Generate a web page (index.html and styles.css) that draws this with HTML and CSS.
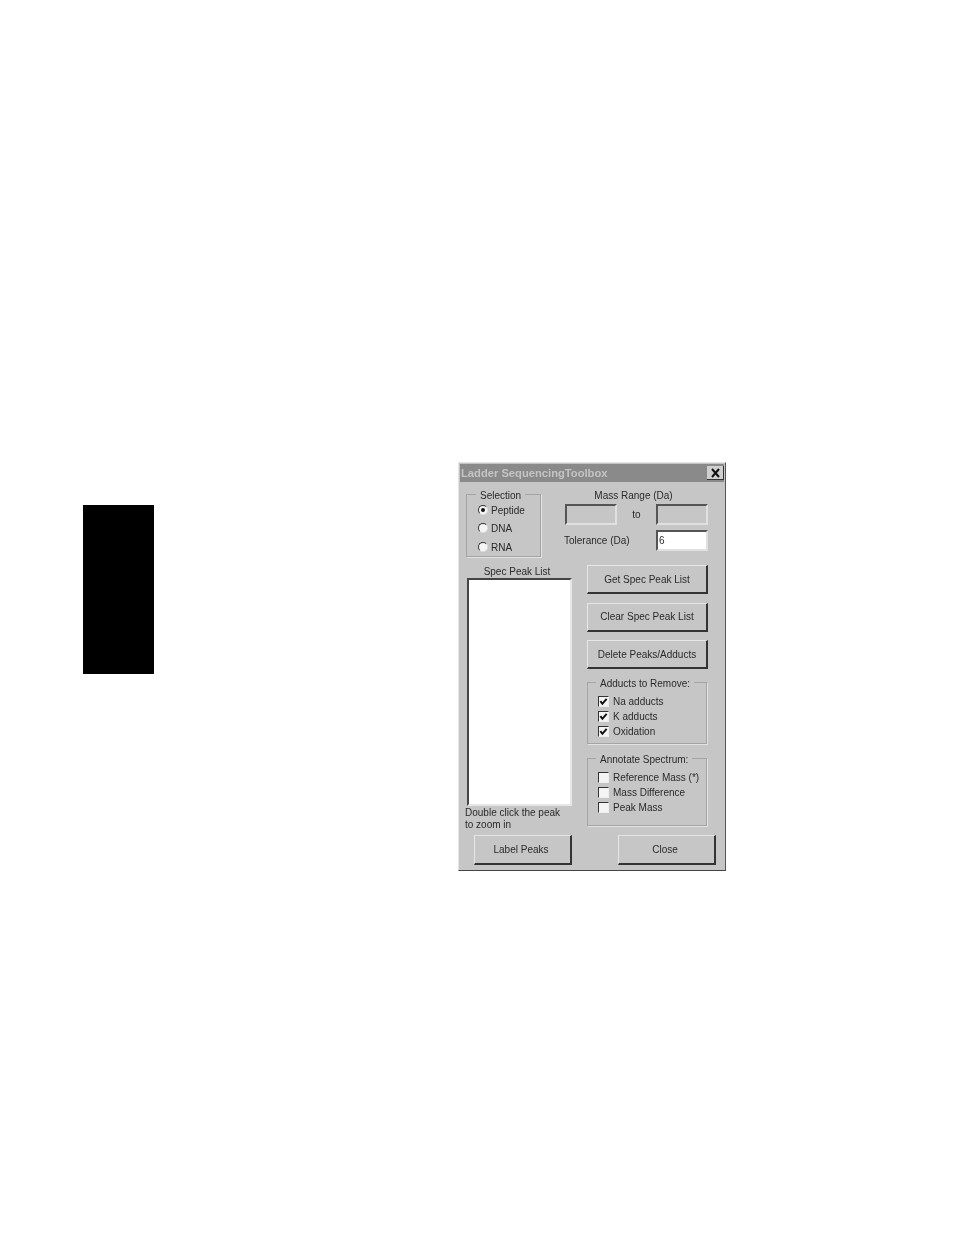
FILE: index.html
```html
<!DOCTYPE html>
<html lang="en">
<head>
  <meta charset="UTF-8">
  <title>Ladder Sequencing Toolbox</title>
  <link rel="stylesheet" href="styles.css">
</head>
<body>
  <div class="tab"></div>

  <div class="dialog">
    <div class="titlebar">
      <span>Ladder SequencingToolbox</span>
      <div class="close-x">
        <svg width="11" height="10" viewBox="0 0 11 10"><path d="M2 1 L9 9 M9 1 L2 9" stroke="#111" stroke-width="2" fill="none"/></svg>
      </div>
    </div>

    <div class="top-row">
      <div class="group selection">
        <div class="legend">Selection</div>
        <div class="radio-row r1"><span class="radio on"></span>Peptide</div>
        <div class="radio-row r2"><span class="radio"></span>DNA</div>
        <div class="radio-row r3"><span class="radio"></span>RNA</div>
      </div>
      <div class="mass">
        <div class="mass-title">Mass Range (Da)</div>
        <div class="mass-row">
          <div class="field"></div>
          <div class="to">to</div>
          <div class="field"></div>
        </div>
        <div class="tol-row">
          <div class="tol-label">Tolerance (Da)</div>
          <div class="field white">6</div>
        </div>
      </div>
    </div>

    <div class="mid-row">
      <div class="list-col">
        <div class="list-title">Spec Peak List</div>
        <div class="listbox"></div>
        <div class="hint">Double click the peak<br>to zoom in</div>
      </div>
      <div class="side-col">
        <div class="btn wide">Get Spec Peak List</div>
        <div class="btn wide">Clear Spec Peak List</div>
        <div class="btn wide">Delete Peaks/Adducts</div>

        <div class="group adducts">
          <div class="legend">Adducts to Remove:</div>
          <div class="check-row"><span class="check"><svg width="10" height="10" viewBox="0 0 10 10"><path d="M1.5 4 L3.8 7 L8.5 1.5" stroke="#111" stroke-width="2.2" fill="none"/></svg></span>Na adducts</div>
          <div class="check-row"><span class="check"><svg width="10" height="10" viewBox="0 0 10 10"><path d="M1.5 4 L3.8 7 L8.5 1.5" stroke="#111" stroke-width="2.2" fill="none"/></svg></span>K adducts</div>
          <div class="check-row"><span class="check"><svg width="10" height="10" viewBox="0 0 10 10"><path d="M1.5 4 L3.8 7 L8.5 1.5" stroke="#111" stroke-width="2.2" fill="none"/></svg></span>Oxidation</div>
        </div>

        <div class="group annotate">
          <div class="legend">Annotate Spectrum:</div>
          <div class="check-row"><span class="check"></span>Reference Mass (*)</div>
          <div class="check-row"><span class="check"></span>Mass Difference</div>
          <div class="check-row"><span class="check"></span>Peak Mass</div>
        </div>
      </div>
    </div>

    <div class="bottom-row">
      <div class="btn bottom">Label Peaks</div>
      <div class="btn bottom">Close</div>
    </div>
  </div>
</body>
</html>
```

FILE: styles.css
```css
html, body {
  margin: 0;
  background: #fff;
}

body {
  width: 954px;
  height: 1235px;
  box-sizing: border-box;
  padding: 462px 0 0 83px;
  display: flex;
  align-items: flex-start;
  font-family: "Liberation Sans", Arial, sans-serif;
  font-size: 10px;
  color: #2a2a2a;
  overflow: hidden;
}

.tab {
  width: 71px;
  height: 169px;
  margin-top: 43px;
  background: #000;
}

.dialog {
  width: 268px;
  height: 409px;
  box-sizing: border-box;
  margin-left: 304px;
  background: #c6c6c6;
  border-top: 1px solid #e4e4e4;
  border-left: 1px solid #e4e4e4;
  border-right: 1px solid #555;
  border-bottom: 1px solid #444;
  filter: blur(0.7px);
}

.titlebar {
  height: 18px;
  margin: 1px 1px 0;
  padding: 0 0 0 1px;
  box-sizing: border-box;
  background: #8a8a8a;
  color: #c4c4c4;
  font-size: 11.2px;
  font-weight: bold;
  display: flex;
  align-items: center;
  justify-content: space-between;
}

.close-x {
  width: 16px;
  height: 13px;
  background: #cfcfcf;
  border-right: 1px solid #333;
  border-bottom: 1px solid #333;
  display: flex;
  align-items: center;
  justify-content: center;
}

.top-row {
  display: flex;
  height: 83px;
  padding: 11px 0 0 7px;
  box-sizing: border-box;
}

.group {
  position: relative;
  box-sizing: border-box;
  border: 1px solid #a4a4a4;
  box-shadow: 1px 1px 0 #e2e2e2;
}

.legend {
  position: absolute;
  top: -5px;
  background: #c6c6c6;
  padding: 0 4px;
  line-height: 12px;
  white-space: nowrap;
}

.selection {
  width: 75px;
  height: 63px;
  margin-top: 1px;
}

.selection .legend {
  left: 9px;
}

.radio-row {
  position: absolute;
  left: 11px;
  display: flex;
  align-items: center;
  gap: 3px;
  line-height: 12px;
}

.r1 { top: 10px; }
.r2 { top: 28px; }
.r3 { top: 47px; }

.radio {
  width: 10px;
  height: 10px;
  box-sizing: border-box;
  border-radius: 50%;
  background: #f4f4f4;
  border: 1px solid;
  border-color: #333 #ddd #ddd #333;
  display: flex;
  align-items: center;
  justify-content: center;
  transform: translateY(-1px);
}

.radio.on::after {
  content: "";
  width: 4px;
  height: 4px;
  border-radius: 50%;
  background: #111;
}

.mass {
  width: 143px;
  margin-left: 24px;
}

.mass-title {
  text-align: center;
  line-height: 12px;
  padding-right: 6px;
  margin-top: -3px;
}

.mass-row {
  display: flex;
  align-items: center;
  justify-content: space-between;
  margin-top: 2px;
}

.field {
  width: 52px;
  height: 21px;
  box-sizing: border-box;
  border: 2px solid;
  border-color: #555 #e0e0e0 #e0e0e0 #555;
  background: #c6c6c6;
  line-height: 17px;
  padding-left: 1px;
}

.field.white {
  background: #fff;
}

.to {
  text-align: center;
}

.tol-row {
  display: flex;
  align-items: center;
  justify-content: space-between;
  margin-top: 5px;
}

.tol-label {
  margin-left: -1px;
}

.mid-row {
  display: flex;
  height: 270px;
  padding-left: 8px;
}

.list-col {
  width: 105px;
}

.list-title {
  text-align: center;
  line-height: 12px;
  padding-top: 1px;
  width: 100px;
}

.listbox {
  width: 105px;
  height: 228px;
  box-sizing: border-box;
  background: #fff;
  border: 2px solid;
  border-color: #444 #e6e6e6 #e6e6e6 #444;
}

.hint {
  margin-left: -2px;
  padding-top: 1px;
  line-height: 12px;
  white-space: nowrap;
}

.side-col {
  width: 121px;
  margin-left: 15px;
}

.btn {
  box-sizing: border-box;
  display: flex;
  align-items: center;
  justify-content: center;
  background: #c6c6c6;
  border-style: solid;
  border-width: 1px 2px 2px 1px;
  border-color: #e6e6e6 #333 #333 #e6e6e6;
}

.btn.wide {
  width: 121px;
  height: 29px;
  margin-bottom: 8.5px;
}

.adducts {
  width: 120px;
  height: 62px;
  margin-top: 13px;
  padding-top: 11px;
}

.annotate {
  width: 120px;
  height: 68px;
  margin-top: 14px;
  padding-top: 11px;
}

.adducts .legend,
.annotate .legend {
  left: 8px;
}

.check-row {
  display: flex;
  align-items: center;
  gap: 4px;
  height: 15px;
  padding-left: 10px;
  white-space: nowrap;
}

.check {
  width: 11px;
  height: 11px;
  box-sizing: border-box;
  background: #f4f4f4;
  border: 1px solid;
  border-color: #333 #eee #eee #333;
  display: flex;
  align-items: center;
  justify-content: center;
}

.bottom-row {
  display: flex;
  padding-left: 15px;
  gap: 46px;
}

.btn.bottom {
  width: 98px;
  height: 30px;
  padding-right: 3px;
}
```
